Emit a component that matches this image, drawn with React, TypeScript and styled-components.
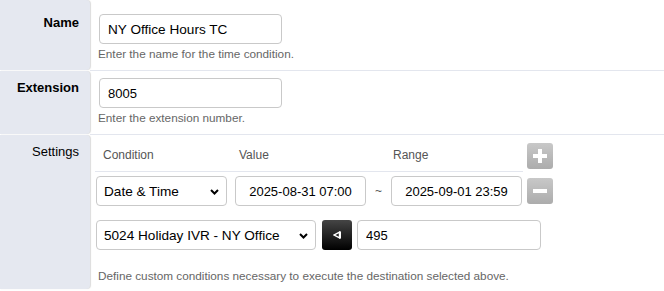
import React from 'react';
import styled, { createGlobalStyle } from 'styled-components';

const Global = createGlobalStyle`
  html, body { margin: 0; padding: 0; background: #fff; }
  body { font-family: "Liberation Sans", Arial, sans-serif; }
`;

const Form = styled.div`
  display: grid;
  grid-template-columns: 90px 1fr;
  width: 664px;
`;

const Label = styled.div<{ $bold?: boolean; $top: number }>`
  background: #e5e8f0;
  border-radius: 0 4px 4px 0;
  box-shadow: 1px 0 1px rgba(0, 0, 0, 0.14);
  margin-bottom: 1px;
  text-align: right;
  padding: ${(p) => p.$top}px 11px 0 0;
  font-size: 13px;
  line-height: 16px;
  font-weight: ${(p) => (p.$bold ? 700 : 400)};
  color: #000;
`;

const Cell = styled.div<{ $top: number; $bottom: number; $line?: boolean }>`
  padding: ${(p) => p.$top}px 0 ${(p) => p.$bottom}px 8px;
  border-bottom: ${(p) => (p.$line ? '1px solid #e3e6ee' : 'none')};
  display: flex;
  flex-direction: column;
  align-items: flex-start;
`;

const TextInput = styled.input<{ $w: number; $center?: boolean; $ml?: number; $fs?: number }>`
  box-sizing: border-box;
  flex: none;
  width: ${(p) => p.$w}px;
  height: 30px;
  margin: 0 0 0 ${(p) => p.$ml ?? 1}px;
  padding: 0 8px;
  border: 1px solid #c9c9c9;
  border-radius: 4px;
  background: #fff;
  font-family: "Liberation Sans", Arial, sans-serif;
  font-size: ${(p) => p.$fs ?? 13}px;
  color: #000;
  text-align: ${(p) => (p.$center ? 'center' : 'left')};
  outline: none;
`;

const Help = styled.div<{ $mt: number }>`
  margin-top: ${(p) => p.$mt}px;
  font-size: 11.75px;
  line-height: 14px;
  color: #666;
`;

const SelectWrap = styled.div<{ $w: number }>`
  position: relative;
  box-sizing: border-box;
  width: ${(p) => p.$w}px;
  height: 30px;
  border: 1px solid #c9c9c9;
  border-radius: 4px;
  background: #fff;
  display: flex;
  align-items: center;
  padding-left: 7px;
  font-size: 13.6px;
  color: #000;
  flex: none;
`;

const Chevron = styled.svg`
  position: absolute;
  right: 7px;
  top: 12px;
`;

const HeaderRow = styled.div`
  display: flex;
  align-items: flex-start;
  gap: 4px;
  margin-left: -3px;
`;

const HeaderCells = styled.div`
  width: 428px;
  height: 28px;
  border-bottom: 1px solid #e3e6ee;
  position: relative;
  font-size: 12px;
  line-height: 14px;
  color: #555;
`;

const HeadText = styled.span<{ $x: number }>`
  position: absolute;
  left: ${(p) => p.$x}px;
  top: 5px;
`;

const Row = styled.div<{ $mt: number }>`
  display: flex;
  align-items: center;
  margin-top: ${(p) => p.$mt}px;
  margin-left: -2px;
`;

const Tilde = styled.span`
  width: 25px;
  text-align: center;
  font-size: 12px;
  color: #555;
  flex: none;
`;

const GrayBtn = styled.button<{ $ml?: number }>`
  width: 26px;
  height: 26px;
  flex: none;
  margin-left: ${(p) => p.$ml ?? 0}px;
  padding: 0;
  border: none;
  border-radius: 3px;
  background: linear-gradient(#c8c8c8, #acacac);
  display: flex;
  align-items: center;
  justify-content: center;
`;

const DarkBtn = styled.button`
  width: 30px;
  height: 30px;
  flex: none;
  margin: 0 5px 0 6px;
  padding: 0;
  border: none;
  border-radius: 3px;
  background: linear-gradient(#454545, #000);
  display: flex;
  align-items: center;
  justify-content: center;
`;

const Select = ({ w, value }: { w: number; value: string }) => (
  <SelectWrap $w={w}>
    {value}
    <Chevron width="9" height="6" viewBox="0 0 9 6">
      <path d="M1 1 L4.5 4.5 L8 1" stroke="#000" strokeWidth="2" fill="none" />
    </Chevron>
  </SelectWrap>
);

const Plus = () => (
  <svg width="14" height="14" viewBox="0 0 14 14">
    <rect x="5" y="0" width="4" height="14" fill="#fff" />
    <rect x="0" y="5" width="14" height="4" fill="#fff" />
  </svg>
);

const Minus = () => (
  <svg width="14" height="4" viewBox="0 0 14 4">
    <rect x="0" y="0" width="14" height="4" fill="#fff" />
  </svg>
);

const Back = () => (
  <svg width="8" height="8" viewBox="0 0 8 8">
    <path d="M6.5 1.2 L1.2 4 L6.5 6.8 Z" stroke="#fff" strokeWidth="1.4" fill="none" />
    <rect x="6" y="0.5" width="2" height="7" fill="#fff" />
  </svg>
);

export default function App() {
  return (
    <>
      <Global />
      <Form>
        <Label $bold $top={15}>Name</Label>
        <Cell $top={14} $bottom={9} $line>
          <TextInput $w={183} $fs={13.6} defaultValue="NY Office Hours TC" />
          <Help $mt={3}>Enter the name for the time condition.</Help>
        </Cell>

        <Label $bold $top={9}>Extension</Label>
        <Cell $top={7} $bottom={9} $line>
          <TextInput $w={183} defaultValue="8005" />
          <Help $mt={3}>Enter the extension number.</Help>
        </Cell>

        <Label $top={9}>Settings</Label>
        <Cell $top={8} $bottom={7}>
          <HeaderRow>
            <HeaderCells>
              <HeadText $x={8}>Condition</HeadText>
              <HeadText $x={144}>Value</HeadText>
              <HeadText $x={298}>Range</HeadText>
            </HeaderCells>
            <GrayBtn>
              <Plus />
            </GrayBtn>
          </HeaderRow>
          <Row $mt={4}>
            <Select w={131} value="Date & Time" />
            <TextInput $w={131} $center $ml={8} defaultValue="2025-08-31 07:00" />
            <Tilde>~</Tilde>
            <TextInput $w={131} $center $ml={0} defaultValue="2025-09-01 23:59" />
            <GrayBtn $ml={5}>
              <Minus />
            </GrayBtn>
          </Row>
          <Row $mt={14}>
            <Select w={220} value="5024 Holiday IVR - NY Office" />
            <DarkBtn>
              <Back />
            </DarkBtn>
            <TextInput $w={184} $ml={0} defaultValue="495" />
          </Row>
          <Help $mt={19}>Define custom conditions necessary to execute the destination selected above.</Help>
        </Cell>
      </Form>
    </>
  );
}
